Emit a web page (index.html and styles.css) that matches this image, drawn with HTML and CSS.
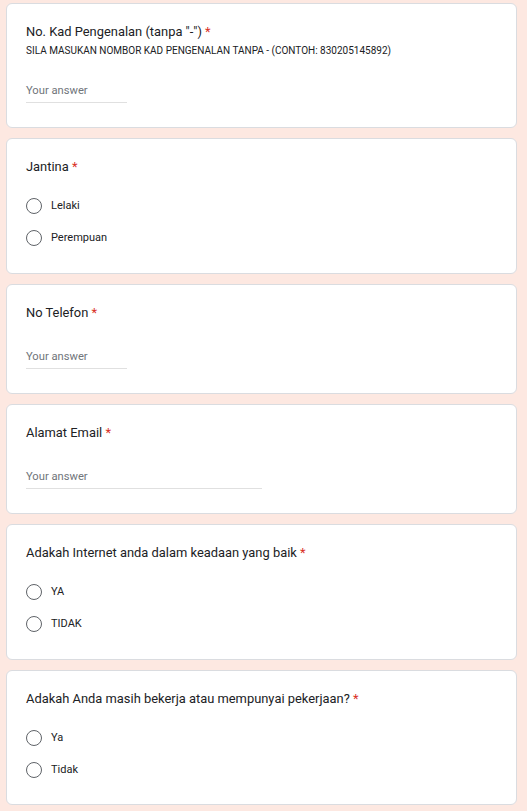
FILE: index.html
```html
<!DOCTYPE html>
<html lang="ms">
<head>
<meta charset="utf-8">
<title>Borang</title>
<link rel="stylesheet" href="styles.css">
</head>
<body>
<main class="form">
  <section class="card">
    <div class="title">No. Kad Pengenalan (tanpa "-") <span class="req">*</span></div>
    <div class="desc">SILA MASUKAN NOMBOR KAD PENGENALAN TANPA - (CONTOH: 830205145892)</div>
    <div class="answer answer-short answer-after-desc">Your answer</div>
  </section>

  <section class="card">
    <div class="title">Jantina <span class="req">*</span></div>
    <div class="options">
      <div class="option"><span class="radio"></span><span class="label">Lelaki</span></div>
      <div class="option"><span class="radio"></span><span class="label">Perempuan</span></div>
    </div>
  </section>

  <section class="card">
    <div class="title">No Telefon <span class="req">*</span></div>
    <div class="answer answer-short">Your answer</div>
  </section>

  <section class="card">
    <div class="title">Alamat Email <span class="req">*</span></div>
    <div class="answer answer-long">Your answer</div>
  </section>

  <section class="card">
    <div class="title">Adakah Internet anda dalam keadaan yang baik <span class="req">*</span></div>
    <div class="options">
      <div class="option"><span class="radio"></span><span class="label">YA</span></div>
      <div class="option"><span class="radio"></span><span class="label">TIDAK</span></div>
    </div>
  </section>

  <section class="card card-last">
    <div class="title">Adakah Anda masih bekerja atau mempunyai pekerjaan? <span class="req">*</span></div>
    <div class="options">
      <div class="option"><span class="radio"></span><span class="label">Ya</span></div>
      <div class="option"><span class="radio"></span><span class="label">Tidak</span></div>
    </div>
  </section>
</main>
</body>
</html>
```
FILE: styles.css
```css
* { box-sizing: border-box; }

html, body {
  margin: 0;
  padding: 0;
  background: #fde8e1;
  font-family: Roboto, "Liberation Sans", Arial, sans-serif;
  color: #202124;
}

.form {
  display: flex;
  flex-direction: column;
  gap: 10px;
  padding: 3px 10px 10px 6px;
}

.card {
  background: #ffffff;
  border: 1px solid #dadce0;
  border-radius: 6px;
  padding: 19px 19px 19px 19px;
}

.card-last {
  padding-bottom: 18px;
}

.title {
  font-size: 12.9px;
  line-height: 18px;
  color: #202124;
}

.req {
  color: #d93025;
}

.desc {
  margin-top: 2px;
  font-size: 10px;
  line-height: 16px;
  color: #202124;
}

.answer {
  margin-top: 27px;
  margin-bottom: 5px;
  font-size: 11.2px;
  line-height: 16px;
  color: #70757a;
  padding-bottom: 3px;
  border-bottom: 1px solid #e0e0e0;
}

.answer-after-desc {
  margin-top: 24px;
}

.answer-short { width: 101px; }
.answer-long { width: 236px; }

.options {
  margin-top: 14px;
  display: flex;
  flex-direction: column;
}

.option {
  height: 32px;
  display: flex;
  align-items: center;
  gap: 9px;
}

.radio {
  width: 16px;
  height: 16px;
  border: 1.5px solid #5f6368;
  border-radius: 50%;
  flex: none;
}

.label {
  font-size: 11px;
  line-height: 16px;
  color: #202124;
}
```
